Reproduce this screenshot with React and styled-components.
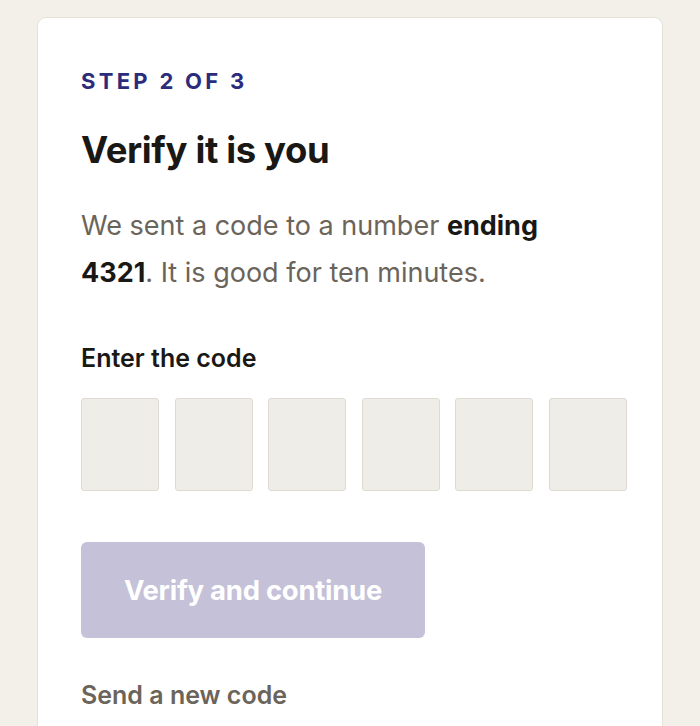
import React from 'react';
import styled, { createGlobalStyle } from 'styled-components';

const GlobalStyle = createGlobalStyle`
  html, body {
    margin: 0;
    padding: 0;
    background: #f3f0e9;
  }
  body {
    font-family: Inter, Roboto, "Liberation Sans", sans-serif;
    -webkit-font-smoothing: antialiased;
  }
`;

const Page = styled.div`
  min-height: 726px;
  padding: 17px 37px 0 37px;
  box-sizing: border-box;
  overflow: hidden;
`;

const Card = styled.section`
  background: #ffffff;
  border: 1px solid #e6e2d9;
  border-radius: 9px;
  padding: 44px 36px 60px 43px;
  min-height: 760px;
  box-sizing: border-box;
`;

const Eyebrow = styled.div`
  font-size: 22px;
  font-weight: 700;
  letter-spacing: 0.15em;
  color: #2b2d7c;
  line-height: 1;
  margin-top: 8px;
`;

const Title = styled.h1`
  margin: 38px 0 0;
  font-size: 36.5px;
  font-weight: 700;
  letter-spacing: -0.01em;
  color: #1a1814;
  line-height: 1.1;
`;

const Lead = styled.p`
  margin: 32px 0 0;
  font-size: 27px;
  line-height: 47px;
  color: #6b645a;
  max-width: 470px;

  strong {
    color: #1a1814;
    font-weight: 700;
  }
`;

const Label = styled.div`
  margin-top: 47px;
  font-size: 25px;
  font-weight: 600;
  color: #1a1814;
  line-height: 1.2;
`;

const CodeRow = styled.div`
  display: grid;
  grid-template-columns: repeat(6, 78px);
  column-gap: 15.6px;
  margin-top: 25px;
`;

const CodeBox = styled.input`
  width: 78px;
  height: 93px;
  box-sizing: border-box;
  background: #efede8;
  border: 1px solid #dfdbd2;
  border-radius: 3px;
  outline: none;
  text-align: center;
  font-size: 36px;
  font-family: inherit;
  color: #1a1814;
  padding: 0;
`;

const PrimaryButton = styled.button`
  display: block;
  margin-top: 51px;
  width: 344px;
  height: 96px;
  border: none;
  border-radius: 6px;
  background: ${p => (p.disabled ? '#c4c1d8' : '#2b2d7c')};
  color: #ffffff;
  font-family: inherit;
  font-size: 27.5px;
  font-weight: 700;
  letter-spacing: -0.01em;
  cursor: ${p => (p.disabled ? 'default' : 'pointer')};
`;

const TextLink = styled.button`
  display: block;
  margin-top: 42px;
  padding: 0;
  border: none;
  background: none;
  font-family: inherit;
  font-size: 25px;
  font-weight: 600;
  color: #6b645a;
  cursor: pointer;
`;

export default function App() {
  const slots = [0, 1, 2, 3, 4, 5];
  return (
    <>
      <GlobalStyle />
      <Page>
        <Card>
          <Eyebrow>STEP 2 OF 3</Eyebrow>
          <Title>Verify it is you</Title>
          <Lead>
            We sent a code to a number <strong>ending 4321</strong>. It is good for ten minutes.
          </Lead>
          <Label>Enter the code</Label>
          <CodeRow>
            {slots.map(i => (
              <CodeBox key={i} inputMode="numeric" maxLength={1} aria-label={`Digit ${i + 1}`} />
            ))}
          </CodeRow>
          <PrimaryButton disabled>Verify and continue</PrimaryButton>
          <TextLink>Send a new code</TextLink>
        </Card>
      </Page>
    </>
  );
}
